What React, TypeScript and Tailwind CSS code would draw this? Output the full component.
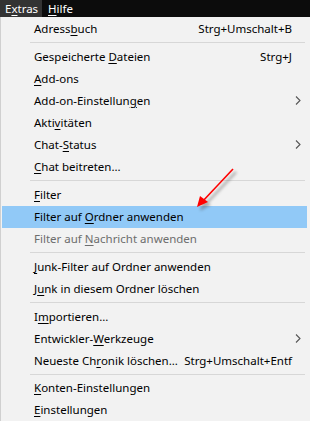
import React from "react";

type Item =
  | { type: "sep" }
  | {
      type: "item";
      pre: string;
      u: string;
      post: string;
      shortcut?: string;
      sub?: boolean;
      active?: boolean;
      disabled?: boolean;
    };

const items: Item[] = [
  { type: "item", pre: "Adress", u: "b", post: "uch", shortcut: "Strg+Umschalt+B" },
  { type: "sep" },
  { type: "item", pre: "Gespeicherte ", u: "D", post: "ateien", shortcut: "Strg+J" },
  { type: "item", pre: "", u: "A", post: "dd-ons" },
  { type: "item", pre: "Add-on-Einstellun", u: "g", post: "en", sub: true },
  { type: "item", pre: "Akti", u: "v", post: "itäten" },
  { type: "item", pre: "Chat-", u: "S", post: "tatus", sub: true },
  { type: "item", pre: "", u: "C", post: "hat beitreten..." },
  { type: "sep" },
  { type: "item", pre: "", u: "F", post: "ilter" },
  { type: "item", pre: "Filter auf ", u: "O", post: "rdner anwenden", active: true },
  { type: "item", pre: "Filter auf ", u: "N", post: "achricht anwenden", disabled: true },
  { type: "sep" },
  { type: "item", pre: "", u: "J", post: "unk-Filter auf Ordner anwenden" },
  { type: "item", pre: "J", u: "u", post: "nk in diesem Ordner löschen" },
  { type: "sep" },
  { type: "item", pre: "I", u: "m", post: "portieren..." },
  { type: "item", pre: "Entwickler-", u: "W", post: "erkzeuge", sub: true },
  { type: "item", pre: "Neueste Ch", u: "r", post: "onik löschen...", shortcut: "Strg+Umschalt+Entf" },
  { type: "sep" },
  { type: "item", pre: "", u: "K", post: "onten-Einstellungen" },
  { type: "item", pre: "", u: "E", post: "instellungen" },
];

const font = { fontFamily: '"Noto Sans", "Open Sans", sans-serif' };

export default function App() {
  return (
    <div
      className="relative w-[310px] h-[421px] overflow-hidden bg-[#f2f2f2] text-[11.5px] leading-none"
      style={font}
    >
      {/* menubar */}
      <div className="flex h-[17px] bg-[#0c0c0c] text-white">
        <div className="flex items-center w-[42px] pl-[5px] bg-[#333333]">
          E<span className="underline underline-offset-[2px]">x</span>tras
        </div>
        <div className="flex items-center pl-[6px]">
          <span className="underline underline-offset-[2px]">H</span>ilfe
        </div>
      </div>
      {/* menu */}
      <div className="flex flex-col pt-[1px] border-l border-[#d0d0d0] h-[404px]">
        {items.map((it, i) =>
          it.type === "sep" ? (
            <div key={i} className="h-[6px] flex items-center pl-[29px] pr-[5px]">
              <div className="h-[1px] w-full bg-[#d7d7d7]" />
            </div>
          ) : (
            <div
              key={i}
              className={
                "h-[22px] flex items-center ml-[1px] mr-[3px] pl-[32px] pr-[15px] " +
                (it.active ? "bg-[#91c9f7] " : "") +
                (it.disabled ? "text-[#6d6d6d]" : "text-black")
              }
            >
              <span className="flex-1 whitespace-nowrap">
                {it.pre}
                <span className="underline underline-offset-[2px]">{it.u}</span>
                {it.post}
              </span>
              {it.shortcut && <span className="whitespace-nowrap pl-[4px]">{it.shortcut}</span>}
              {it.sub && (
                <svg width="6" height="9" viewBox="0 0 6 9" className="mr-[-9px]">
                  <path d="M1 0.5 L5 4.5 L1 8.5" fill="none" stroke="#555555" strokeWidth="1.1" />
                </svg>
              )}
            </div>
          )
        )}
      </div>
      {/* red arrow annotation */}
      <svg
        className="absolute left-0 top-0 pointer-events-none"
        width="310"
        height="421"
        viewBox="0 0 310 421"
      >
        <defs>
          <filter id="blur" x="-50%" y="-50%" width="200%" height="200%">
            <feGaussianBlur stdDeviation="1.5" />
          </filter>
        </defs>
        <g filter="url(#blur)" opacity="0.45">
          <line x1="236" y1="172" x2="204" y2="206" stroke="#555" strokeWidth="2.5" />
          <polygon points="200,211 203,200 211,205" fill="#555" />
        </g>
        <line x1="233" y1="169" x2="202" y2="202" stroke="#ff0000" strokeWidth="1.6" />
        <polygon points="197,207 200,196 208,202" fill="#ff0000" />
      </svg>
    </div>
  );
}
